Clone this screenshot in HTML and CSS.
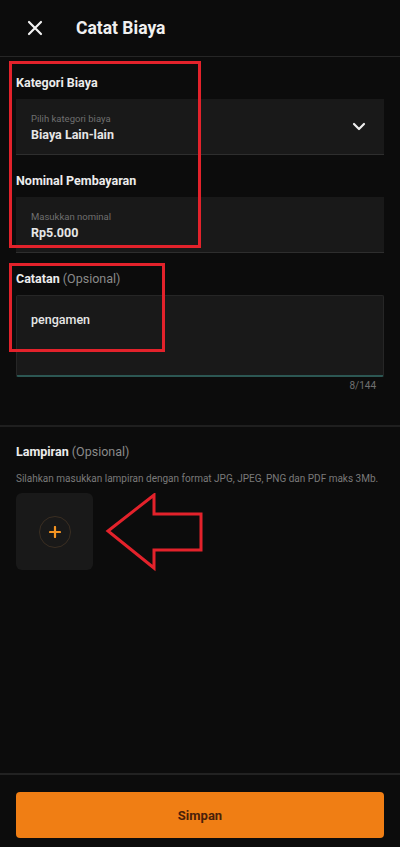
FILE: index.html
```html
<!DOCTYPE html>
<html lang="id">
<head>
    <meta charset="UTF-8">
    <meta name="viewport" content="width=device-width, initial-scale=1.0">
    <title>Catat Biaya</title>
    <link rel="stylesheet" href="styles.css">
</head>
<body>

    <header class="topbar">
        <svg class="close-icon" width="16" height="16" viewBox="0 0 16 16">
            <path d="M2 2 L14 14 M14 2 L2 14" stroke="#f2f2f2" stroke-width="2.2" stroke-linecap="round"/>
        </svg>
        <h1>Catat Biaya</h1>
    </header>

    <main class="form">
        <div class="group">
            <label class="label">Kategori Biaya</label>
            <div class="field">
                <div class="field-text">
                    <span class="hint">Pilih kategori biaya</span>
                    <span class="value">Biaya Lain-lain</span>
                </div>
                <svg class="chevron" width="14" height="9" viewBox="0 0 14 9">
                    <path d="M2 2 L7 7 L12 2" fill="none" stroke="#eeeeee" stroke-width="2.2" stroke-linecap="round" stroke-linejoin="round"/>
                </svg>
            </div>
        </div>

        <div class="group">
            <label class="label">Nominal Pembayaran</label>
            <div class="field">
                <div class="field-text">
                    <span class="hint">Masukkan nominal</span>
                    <span class="value">Rp5.000</span>
                </div>
            </div>
        </div>

        <div class="group">
            <label class="label">Catatan <span class="optional">(Opsional)</span></label>
            <div class="textarea">pengamen</div>
            <div class="counter">8/144</div>
        </div>
    </main>

    <div class="divider"></div>

    <section class="attach">
        <label class="label">Lampiran <span class="optional">(Opsional)</span></label>
        <p class="desc">Silahkan masukkan lampiran dengan format JPG, JPEG, PNG dan PDF maks 3Mb.</p>
        <div class="upload">
            <div class="upload-btn">
                <svg width="12" height="12" viewBox="0 0 12 12">
                    <path d="M6 1 V11 M1 6 H11" stroke="#f39322" stroke-width="2.2" stroke-linecap="round"/>
                </svg>
            </div>
        </div>
    </section>

    <footer class="bottombar">
        <button class="save-btn">Simpan</button>
    </footer>

    <!-- annotations drawn over the screenshot -->
    <div class="mark mark-top"></div>
    <div class="mark mark-note"></div>
    <svg class="mark-arrow" width="100" height="80" viewBox="0 0 100 80">
        <path d="M3 38 L49 2 L49 21 L96 21 L96 57 L49 57 L49 75 Z" fill="none" stroke="#e3222b" stroke-width="3" stroke-linejoin="miter"/>
    </svg>

</body>
</html>
```

FILE: styles.css
```css
* {
    box-sizing: border-box;
}

body {
    margin: 0;
    width: 400px;
    height: 847px;
    position: relative;
    display: flex;
    flex-direction: column;
    background-color: #0c0c0c;
    color: #ececec;
    font-family: Roboto, "Noto Sans", sans-serif;
    overflow: hidden;
}

.topbar {
    height: 57px;
    display: flex;
    align-items: center;
    gap: 33px;
    padding-left: 27px;
    border-bottom: 1px solid #262626;
}

.topbar h1 {
    margin: 0;
    font-size: 17.5px;
    font-weight: 700;
    color: #f0f0f0;
}

.form {
    padding: 17px 16px 0;
    display: flex;
    flex-direction: column;
    gap: 17px;
}

.group {
    display: flex;
    flex-direction: column;
}

.label {
    font-size: 12.5px;
    font-weight: 700;
    color: #ececec;
    line-height: 17px;
    margin-bottom: 8px;
}

.optional {
    font-weight: 400;
    color: #8a8a8a;
}

.field {
    height: 56px;
    background-color: #191919;
    border-bottom: 1px solid #2e2e2e;
    display: flex;
    align-items: center;
    justify-content: space-between;
    padding: 0 16px 0 15px;
}

.field-text {
    display: flex;
    flex-direction: column;
    gap: 3px;
    padding-top: 1px;
}

.hint {
    font-size: 9.5px;
    color: #6f6f6f;
}

.value {
    font-size: 12.5px;
    font-weight: 700;
    color: #e6e6e6;
}

.chevron {
    margin-right: 2px;
}

.textarea {
    height: 82px;
    background-color: #191919;
    border: 1px solid #262626;
    border-bottom: 2px solid #2c5753;
    border-radius: 2px;
    padding: 16px 14px;
    font-size: 12.5px;
    font-weight: 500;
    color: #e6e6e6;
}

.counter {
    align-self: flex-end;
    margin-right: 8px;
    margin-top: 3px;
    font-size: 10px;
    color: #707070;
}

.divider {
    margin-top: 34px;
    height: 2px;
    background-color: #1f1f1f;
}

.attach {
    padding: 16px 16px 0;
    flex: 1;
}

.attach .label {
    display: block;
    margin-bottom: 13px;
}

.desc {
    margin: 0 0 9px;
    font-size: 10px;
    color: #7a7a7a;
    white-space: nowrap;
}

.upload {
    width: 77px;
    height: 77px;
    border-radius: 6px;
    background-color: #191919;
    display: flex;
    align-items: center;
    justify-content: center;
}

.upload-btn {
    width: 32px;
    height: 32px;
    border-radius: 50%;
    border: 1px solid #3a2e22;
    display: flex;
    align-items: center;
    justify-content: center;
}

.bottombar {
    border-top: 2px solid #222222;
    padding: 17px 16px 9px;
}

.save-btn {
    width: 100%;
    height: 46px;
    border: none;
    border-radius: 4px;
    background-color: #f07e14;
    color: #4a210a;
    font-family: inherit;
    font-size: 13px;
    font-weight: 700;
}

/* red annotation marks lying over the form */
.mark {
    position: absolute;
    border: 3px solid #e3222b;
}

.mark-top {
    left: 9px;
    top: 61px;
    width: 192px;
    height: 187px;
}

.mark-note {
    left: 9px;
    top: 263px;
    width: 156px;
    height: 89px;
}

.mark-arrow {
    position: absolute;
    left: 105px;
    top: 493px;
}
```
